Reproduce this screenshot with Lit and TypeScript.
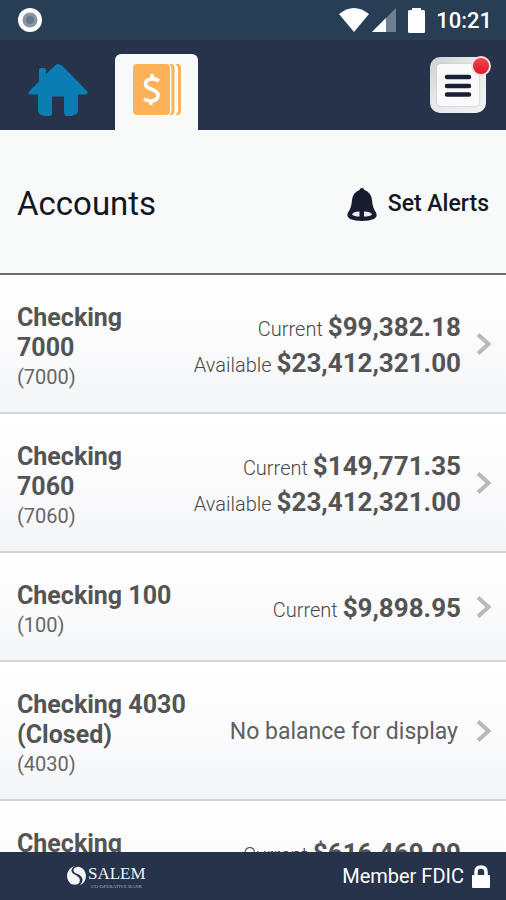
import { LitElement, html, css, nothing } from "lit";
import { customElement, property } from "lit/decorators.js";

interface Account {
  name: string;
  suffix: string;
  current?: string;
  available?: string;
}

const accounts: Account[] = [
  { name: "Checking 7000", suffix: "7000", current: "$99,382.18", available: "$23,412,321.00" },
  { name: "Checking 7060", suffix: "7060", current: "$149,771.35", available: "$23,412,321.00" },
  { name: "Checking 100", suffix: "100", current: "$9,898.95" },
  { name: "Checking 4030 (Closed)", suffix: "4030" },
  { name: "Checking 7080", suffix: "7080", current: "$616,469.09", available: "$23,412,321.00" },
];

@customElement("status-bar")
class StatusBar extends LitElement {
  static styles = css`
    :host {
      display: flex;
      align-items: center;
      justify-content: space-between;
      height: 40px;
      padding: 0 14px 0 17px;
      background: #273e54;
      color: #fff;
    }
    .right {
      display: flex;
      align-items: center;
    }
    .wifi { margin-right: 3px; }
    .signal { margin-right: 12px; }
    .battery { margin-right: 11px; }
    .clock {
      padding-top: 2px;
      font-size: 22px;
      line-height: 38px;
      font-weight: 500;
    }
    svg { display: block; }
  `;

  render() {
    return html`
      <svg width="26" height="26" viewBox="0 0 26 26" aria-hidden="true">
        <circle cx="13" cy="13" r="12" fill="#fff" />
        <circle cx="13" cy="13" r="7.5" fill="#8595a3" />
        <circle cx="13" cy="13" r="4" fill="#66798a" />
      </svg>
      <div class="right">
        <svg class="wifi" width="30" height="24" viewBox="0 0 30 24" aria-hidden="true">
          <path d="M0 6 Q15 -6 30 6 L15 24Z" fill="#fff" />
        </svg>
        <svg class="signal" width="24" height="24" viewBox="0 0 24 24" aria-hidden="true">
          <path d="M24 0V24H0Z" fill="#6d7f90" />
          <path d="M14 10V24H0Z" fill="#fff" />
        </svg>
        <svg class="battery" width="17" height="25" viewBox="0 0 17 25" aria-hidden="true">
          <path d="M4 0H13V2H15.500Q17 2 17 3.500V23.500Q17 25 15.500 25H1.500Q0 25 0 23.500V3.500Q0 2 1.500 2H4Z" fill="#fff" />
        </svg>
        <span class="clock">10:21</span>
      </div>
    `;
  }
}

@customElement("nav-bar")
class NavBar extends LitElement {
  static styles = css`
    :host {
      display: flex;
      align-items: flex-end;
      height: 90px;
      padding: 0 20px 0 28px;
      background: #27334b;
    }
    button {
      border: 0;
      padding: 0;
      margin: 0;
      background: none;
      cursor: pointer;
    }
    svg { display: block; }
    .home {
      padding-bottom: 14px;
      margin-right: 27px;
    }
    .tab {
      display: flex;
      justify-content: center;
      width: 83px;
      height: 76px;
      padding-top: 10px;
      box-sizing: border-box;
      border-radius: 6px 6px 0 0;
      background: #f8f9f9;
    }
    .menu {
      position: relative;
      display: flex;
      align-items: center;
      justify-content: center;
      width: 56px;
      height: 56px;
      margin: 0 0 17px auto;
      border-radius: 10px;
      background: linear-gradient(135deg, #cfcfcf, #e4e5e6 35%, #f1f3f4);
    }
    .face {
      display: flex;
      align-items: center;
      justify-content: center;
      width: 42px;
      height: 42px;
      border-radius: 4px;
      background: #fafafb;
      box-shadow: 0 0 2px #b4b6b9;
    }
    .badge {
      position: absolute;
      top: -1px;
      right: -5px;
      width: 16px;
      height: 16px;
      border: 2px solid #f0dfe2;
      border-radius: 50%;
      background: linear-gradient(#ef4450, #dc1a29);
    }
  `;

  render() {
    return html`
      <button class="home" aria-label="Home">
        <svg width="60" height="52" viewBox="0 0 60 52">
          <path d="M28 .8Q30 -.6 32 .8Q34 1.500 36 3.500L59 27Q61 30.500 57.500 30.500H50V46Q50 49.500 47 50.500L43.500 52H38Q36 51 36 48.500V32.500H24V49.500Q24 52 21.500 52H16L11.500 50Q10 48.500 10 46V30.500H2.500Q-1 30.500 1 27.500L11 17.500V5.500Q11 4 13 4H16Q18 4 18 6V10Z" fill="#0a7db3" />
        </svg>
      </button>
      <button class="tab" aria-label="Accounts">
        <svg width="48" height="51" viewBox="0 0 48 51">
          <rect width="37" height="51" rx="4" fill="#fdb158" />
          <path d="M37 0Q41 0 41 4V47Q41 51 37 51Q39 49 39 46V5Q39 2 37 0Z" fill="#fdb158" stroke="#fdb158" />
          <path d="M43 0Q47.500 0 47.500 4V47Q47.500 51 43 51Q45.500 49 45.500 46V5Q45.500 2 43 0Z" fill="#fdb158" stroke="#fdb158" />
          <path d="M26 17Q22.500 14.500 18.500 15Q12.500 15.500 12.500 20Q12.500 23 17 24.500L21 26.500Q25.500 28.500 25 32Q24.500 36.500 18 37Q14 37 11 35M19 10V15M18 37V41" fill="none" stroke="#fff" stroke-width="3.600" />
        </svg>
      </button>
      <button class="menu" aria-label="Menu">
        <span class="face">
          <svg width="28" height="23" viewBox="0 0 28 23">
            <path d="M3 3H25M3 12H25M3 20.500H25" stroke="#1a2033" stroke-width="4.500" stroke-linecap="round" />
          </svg>
        </span>
        <span class="badge"></span>
      </button>
    `;
  }
}

@customElement("account-row")
class AccountRow extends LitElement {
  @property({ attribute: false }) account!: Account;

  static styles = css`
    :host { display: block; }
    .row {
      display: flex;
      align-items: center;
      border-bottom: 2px solid #d3d5d7;
      background: linear-gradient(#fff, #fbfbfc 50%, #f3f5f7);
      color: #545454;
      text-decoration: none;
    }
    .label {
      flex: 0 1 auto;
      align-self: flex-start;
      padding: 28px 16px 21px 17px;
    }
    .name {
      font-size: 25px;
      line-height: 30px;
      font-weight: 700;
    }
    .suffix {
      font-size: 20px;
      line-height: 28px;
      color: #666;
    }
    .balances {
      flex: none;
      margin-left: auto;
      padding-top: 3px;
      text-align: right;
      white-space: nowrap;
      font-size: 26px;
      line-height: 36px;
    }
    .kind {
      font-size: 20px;
      line-height: 20px;
      font-weight: 300;
      color: #484848;
    }
    .amount { font-weight: 700; }
    .empty {
      padding-right: 3px;
      font-size: 23px;
      color: #606060;
    }
    .chevron {
      flex: none;
      margin: 0 15px;
    }
  `;

  private line(kind: string, amount?: string) {
    return amount
      ? html`<div><span class="kind">${kind} </span><span class="amount">${amount}</span></div>`
      : nothing;
  }

  render() {
    const a = this.account;
    return html`
      <a class="row" href="#${a.suffix}">
        <div class="label">
          <div class="name">${a.name}</div>
          <div class="suffix">(${a.suffix})</div>
        </div>
        <div class="balances">
          ${this.line("Current", a.current)} ${this.line("Available", a.available)}
          ${a.current ? nothing : html`<div class="empty">No balance for display</div>`}
        </div>
        <svg class="chevron" width="15" height="24" viewBox="0 0 15 24" aria-hidden="true">
          <path d="M2 2.500L12.500 12L2 21.500" fill="none" stroke="#b9b9b9" stroke-width="4" />
        </svg>
      </a>
    `;
  }
}

@customElement("app-root")
class AppRoot extends LitElement {
  static styles = css`
    :host {
      display: flex;
      flex-direction: column;
      height: 100vh;
      overflow: hidden;
      background: #fff;
      font-family: Roboto, "Liberation Sans", sans-serif;
    }
    status-bar, nav-bar, .heading, .footer { flex: none; }
    .heading {
      display: flex;
      align-items: center;
      justify-content: space-between;
      padding: 52px 17px 47px;
      border-bottom: 2px solid #6b6c6e;
      background: #f8f9f9;
      color: #14171f;
    }
    .title {
      margin: 0;
      font-size: 33px;
      line-height: 44px;
      font-weight: 400;
    }
    .alerts {
      display: flex;
      align-items: center;
      gap: 11px;
      padding: 0;
      border: 0;
      background: none;
      color: inherit;
      font: 500 23px/44px Roboto, "Liberation Sans", sans-serif;
      cursor: pointer;
    }
    .list {
      flex: 1;
      min-height: 0;
      overflow-y: auto;
      scrollbar-width: none;
    }
    .footer {
      display: flex;
      align-items: center;
      justify-content: space-between;
      height: 48px;
      padding: 0 16px 0 67px;
      background: #27334b;
      color: #fff;
    }
    .brand {
      display: flex;
      align-items: center;
      gap: 2px;
    }
    .wordmark {
      display: flex;
      flex-direction: column;
      align-items: center;
      padding-top: 2px;
      font-family: "Liberation Serif", serif;
    }
    .bank {
      font-size: 17px;
      line-height: 20px;
      color: #f1f3f7;
    }
    .tagline {
      font-size: 5px;
      line-height: 6px;
      color: #a3acbb;
    }
    .member {
      display: flex;
      align-items: center;
      gap: 8px;
      font-size: 20px;
      line-height: 24px;
    }
  `;

  render() {
    return html`
      <status-bar></status-bar>
      <nav-bar></nav-bar>
      <header class="heading">
        <h1 class="title">Accounts</h1>
        <button class="alerts">
          <svg width="30" height="33" viewBox="0 0 30 33" aria-hidden="true">
            <path d="M15 0Q17 0 17.500 2Q24 4.500 25 12Q25.500 20 29 24.500Q31 29 27 31Q22 33 15 33Q8 33 3 31Q-1 29 1 24.500Q4.500 20 5 12Q6 4.500 12.500 2Q13 0 15 0Z" fill="#171d2e" />
            <path d="M5 26.500Q6 23.500 12.500 23.500V28.500Q7 28.500 5 26.500ZM17 23.500Q24 23.500 25 26.500Q23 28.500 17 28.500Z" fill="#e9ebf2" />
          </svg>
          <span>Set Alerts</span>
        </button>
      </header>
      <main class="list">
        ${accounts.map((a) => html`<account-row .account=${a}></account-row>`)}
      </main>
      <footer class="footer">
        <div class="brand">
          <svg width="19" height="20" viewBox="0 0 19 20" aria-hidden="true">
            <path d="M8 0Q1 2 0 9Q0 15 4 18Q10 20 12.500 16.500Q14 12 9.500 9.500Q4 7 4.500 4Q5 1.500 8 0Z" fill="#f4f6f9" />
            <path d="M6.500 3.500Q8 .5 12 .8Q18.500 3 19 9.500Q19 17 12 19.500Q15.500 17 15.500 13.500Q15 9.500 10.500 8Q6 6.500 6.500 3.500Z" fill="#f4f6f9" />
          </svg>
          <div class="wordmark">
            <span class="bank">SALEM</span>
            <span class="tagline">CO-OPERATIVE BANK</span>
          </div>
        </div>
        <div class="member">
          <span>Member FDIC</span>
          <svg width="18" height="23" viewBox="0 0 18 23" aria-hidden="true">
            <path d="M4 11V7Q4 2 9 2Q14 2 14 7V11" fill="none" stroke="#fff" stroke-width="3.500" />
            <rect y="10" width="18" height="13" rx="1" fill="#fff" />
          </svg>
        </div>
      </footer>
    `;
  }
}
